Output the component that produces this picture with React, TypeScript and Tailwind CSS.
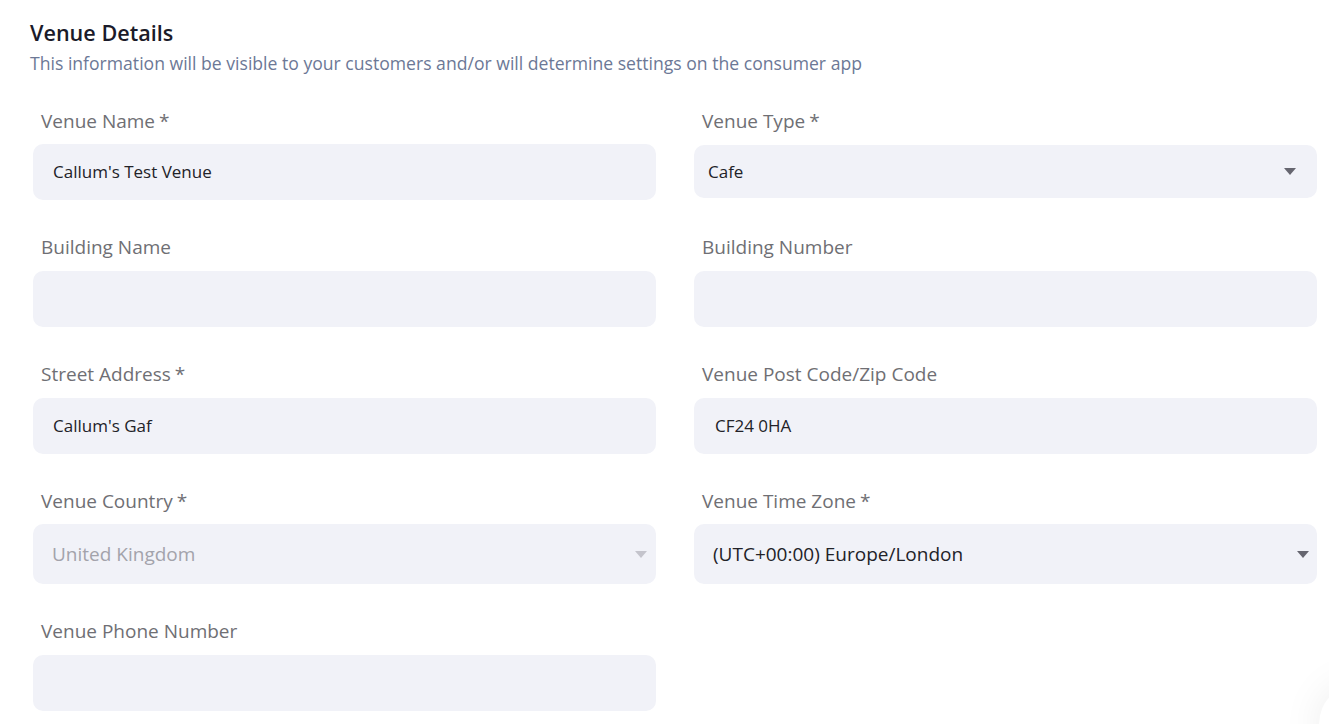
import React from "react";

const font = { fontFamily: '"Open Sans", "Noto Sans", sans-serif' };

function Caret({ light }: { light?: boolean }) {
  return (
    <svg width="12" height="7" viewBox="0 0 12 7" className="shrink-0">
      <path d="M0 0 L12 0 L6 7 Z" fill={light ? "#c4c4cc" : "#666670"} />
    </svg>
  );
}

function Label({ text, req }: { text: string; req?: boolean }) {
  return (
    <div className="h-6 leading-6 pl-2 text-[19px] text-[#6f6f74]">
      {text}
      {req && <span className="ml-1">*</span>}
    </div>
  );
}

export default function App() {
  return (
    <div style={font} className="relative w-[1329px] h-[724px] overflow-hidden bg-white">
      <div className="pl-[30px] pt-[19px]">
        <h1 className="text-[21.6px] leading-7 font-semibold text-[#1b1b2a]">Venue Details</h1>
        <p className="mt-1 text-[17.6px] leading-6 text-[#6c7896]">
          This information will be visible to your customers and/or will determine settings on the consumer app
        </p>
      </div>

      <div className="pl-[33px] pr-[12px] mt-[34px] grid grid-cols-[623px_623px] gap-x-[38px] gap-y-[35px]">
        <div>
          <Label text="Venue Name" req />
          <div className="mt-[11px] h-[56px] rounded-[10px] bg-[#f1f2f8] flex items-center pl-5 text-[17px] text-[#222228]">
            Callum's Test Venue
          </div>
        </div>
        <div>
          <Label text="Venue Type" req />
          <div className="mt-[12px] h-[53px] rounded-[10px] bg-[#f1f2f8] flex items-center justify-between pl-[14px] pr-[21px] text-[17px] text-[#222228]">
            <span>Cafe</span>
            <Caret />
          </div>
        </div>

        <div>
          <Label text="Building Name" />
          <div className="mt-[12px] h-[56px] rounded-[10px] bg-[#f1f2f8]" />
        </div>
        <div>
          <Label text="Building Number" />
          <div className="mt-[12px] h-[56px] rounded-[10px] bg-[#f1f2f8]" />
        </div>

        <div>
          <Label text="Street Address" req />
          <div className="mt-[12px] h-[56px] rounded-[10px] bg-[#f1f2f8] flex items-center pl-5 text-[17px] text-[#222228]">
            Callum's Gaf
          </div>
        </div>
        <div>
          <Label text="Venue Post Code/Zip Code" />
          <div className="mt-[12px] h-[56px] rounded-[10px] bg-[#f1f2f8] flex items-center pl-[21px] text-[17px] text-[#222228]">
            CF24 0HA
          </div>
        </div>

        <div>
          <Label text="Venue Country" req />
          <div className="mt-[11px] h-[60px] rounded-[10px] bg-[#f1f2f8] flex items-center justify-between pl-[19px] pr-[9px] text-[19px] text-[#a3a3ab]">
            <span>United Kingdom</span>
            <Caret light />
          </div>
        </div>
        <div>
          <Label text="Venue Time Zone" req />
          <div className="mt-[11px] h-[60px] rounded-[10px] bg-[#f1f2f8] flex items-center justify-between pl-[19px] pr-[8px] text-[19px] text-[#222228]">
            <span>(UTC+00:00) Europe/London</span>
            <Caret />
          </div>
        </div>

        <div>
          <Label text="Venue Phone Number" />
          <div className="mt-[12px] h-[56px] rounded-[10px] bg-[#f1f2f8]" />
        </div>
      </div>

      <div className="absolute right-[-70px] bottom-[-40px] w-[80px] h-[80px] rounded-full bg-white shadow-[0_0_40px_rgba(0,0,0,0.08)]" />
    </div>
  );
}
